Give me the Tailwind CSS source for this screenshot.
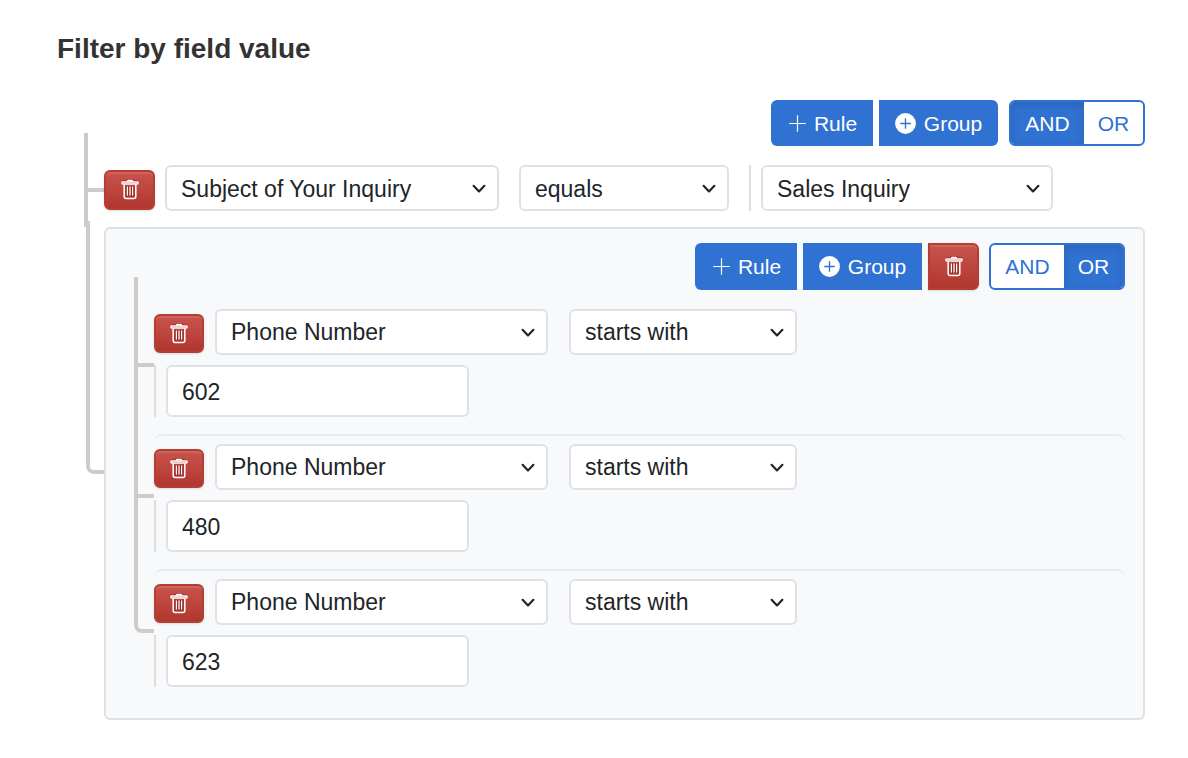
<!DOCTYPE html>
<html lang="en">
<head>
    <meta charset="UTF-8">
    <meta name="viewport" content="width=device-width, initial-scale=1.0">
    <title>Filter by field value</title>
    <script src="https://cdn.jsdelivr.net/npm/@tailwindcss/browser@4"></script>
</head>
<body class="bg-white font-['Liberation_Sans',Arial,sans-serif] text-[23px] text-[#212529]">
    <!-- Icons shared by the rows below -->
    <svg class="hidden" aria-hidden="true">
        <symbol id="icon-trash" viewBox="0 0 18 22">
            <g fill="none" stroke="#962a25" stroke-width="1.4">
                <path d="M5.5 .9h7M1 2.2h16"/>
                <path d="M5.2 6.4v11.2M7.6 7v10.4M10.4 7v10.4M12.8 6.4v11.2"/>
            </g>
            <g fill="none" stroke="currentColor" stroke-linejoin="round">
                <rect x=".9" y="3" width="16.2" height="2" rx=".8" stroke-width="1.3"/>
                <path d="M6.2 2.6l.7-1h4.2l.7 1" stroke-width="1.6"/>
                <path d="M3.2 5.4v12c0 1.3.8 2 2 2h7.6c1.2 0 2-.7 2-2v-12" stroke-width="1.5"/>
                <path d="M6.4 7.4v9.2M9 7.4v9.2M11.6 7.4v9.2" stroke-width="1.2"/>
            </g>
        </symbol>
        <symbol id="icon-plus" viewBox="0 0 16 16">
            <path d="M8 .2v15.6M.2 8h15.6" fill="none" stroke="currentColor" stroke-width="1.1"/>
        </symbol>
        <symbol id="icon-plus-circle" viewBox="0 0 22 22">
            <circle cx="11" cy="11" r="10.9" fill="currentColor"/>
            <path d="M11 5.5v11M5.5 11h11" fill="none" stroke="#3072d2" stroke-width="1.4"/>
        </symbol>
        <symbol id="icon-chevron" viewBox="0 0 14 10">
            <path d="M1.6 1.8L7 7.4l5.4-5.6" fill="none" stroke="currentColor" stroke-width="2.2" stroke-linecap="round" stroke-linejoin="round"/>
        </symbol>
    </svg>

    <main class="pt-[33px] pr-[43px] pb-9 pl-[57px]">
        <h1 class="text-[28px] leading-8 font-bold text-[#333]">Filter by field value</h1>

        <div class="mt-[35px] pl-[47px]">
            <div class="flex justify-end text-[21px]">
                <button type="button" class="flex h-[46px] w-[102px] items-center justify-center gap-2 rounded-l-md bg-[#3072d2] pt-px pl-0.5 text-white">
                    <svg class="size-[17px]"><use href="#icon-plus"/></svg>Rule
                </button>
                <button type="button" class="ml-1.5 flex h-[46px] w-[119px] items-center justify-center gap-2 rounded-r-md bg-[#3072d2] pt-px text-white">
                    <svg class="size-[21px]"><use href="#icon-plus-circle"/></svg>Group
                </button>
                <div class="ml-[11px] flex h-[46px] overflow-hidden rounded-md border-2 border-[#3072d2] bg-white text-[#3072d2]">
                    <label class="flex w-[73px] items-center justify-center pt-px has-checked:bg-[#3072d2] has-checked:text-white has-checked:inset-shadow-[0_3px_8px_#00000020]">
                        <input type="radio" name="root_cond" value="AND" class="sr-only" checked>AND
                    </label>
                    <label class="flex w-[59px] items-center justify-center pt-px has-checked:bg-[#3072d2] has-checked:text-white has-checked:inset-shadow-[0_3px_8px_#00000020]">
                        <input type="radio" name="root_cond" value="OR" class="sr-only">OR
                    </label>
                </div>
            </div>

            <ul>
                <li class="relative mt-[19px] flex items-center before:absolute before:-top-8 before:bottom-[19px] before:-left-5 before:w-5 before:border-b-4 before:border-l-4 before:border-[#ccc] after:absolute after:top-[27px] after:-bottom-4 after:-left-5 after:border-l-4 after:border-[#ccc]">
                    <button type="button" aria-label="Delete rule" class="relative z-10 mt-1 flex h-10 w-[51px] items-center justify-center rounded-md border-2 border-[#b33f33] bg-linear-to-b from-[#c9544d] to-[#b0362e] text-white shadow-sm inset-shadow-[0_2px_0_#ffffff18]">
                        <svg class="h-[22px] w-[18px]"><use href="#icon-trash"/></svg>
                    </button>
                    <div class="relative ml-2.5 w-[334px]">
                        <select aria-label="Field" class="h-[46px] w-full appearance-none rounded-md border-2 border-[#dee2e6] bg-white px-3.5 pt-0.5">
                            <option>Subject of Your Inquiry</option>
                        </select>
                        <svg class="pointer-events-none absolute top-[19px] right-[13px] h-2.5 w-3.5"><use href="#icon-chevron"/></svg>
                    </div>
                    <div class="relative ml-5 w-[210px]">
                        <select aria-label="Operator" class="h-[46px] w-full appearance-none rounded-md border-2 border-[#dee2e6] bg-white px-3.5 pt-0.5">
                            <option>equals</option>
                        </select>
                        <svg class="pointer-events-none absolute top-[19px] right-[13px] h-2.5 w-3.5"><use href="#icon-chevron"/></svg>
                    </div>
                    <div class="ml-5 border-l-2 border-[#ddd] pl-2.5">
                        <div class="relative w-[292px]">
                            <select aria-label="Value" class="h-[46px] w-full appearance-none rounded-md border-2 border-[#dee2e6] bg-white px-3.5 pt-0.5">
                                <option>Sales Inquiry</option>
                            </select>
                            <svg class="pointer-events-none absolute top-[19px] right-[13px] h-2.5 w-3.5"><use href="#icon-chevron"/></svg>
                        </div>
                    </div>
                </li>

                <!-- Nested group -->
                <li class="relative mt-4 rounded-md border-2 border-[#dee2e6] bg-[#f7f9fb] pt-3.5 pr-[18px] pb-3.5 pl-12 before:absolute before:-top-2 before:bottom-1/2 before:-left-5 before:w-[18px] before:rounded-bl-lg before:border-b-4 before:border-l-4 before:border-[#ccc]">
                    <div class="flex justify-end text-[21px]">
                        <button type="button" class="flex h-[47px] w-[102px] items-center justify-center gap-2 rounded-l-md bg-[#3072d2] pl-0.5 text-white">
                            <svg class="size-[17px]"><use href="#icon-plus"/></svg>Rule
                        </button>
                        <button type="button" class="ml-1.5 flex h-[47px] w-[119px] items-center justify-center gap-2 bg-[#3072d2] text-white">
                            <svg class="size-[21px]"><use href="#icon-plus-circle"/></svg>Group
                        </button>
                        <button type="button" aria-label="Delete group" class="ml-1.5 flex h-[47px] w-[51px] items-center justify-center rounded-r-md border-2 border-[#b33f33] bg-linear-to-b from-[#c9544d] to-[#b0362e] text-white shadow-sm inset-shadow-[0_2px_0_#ffffff18]">
                            <svg class="h-[22px] w-[18px]"><use href="#icon-trash"/></svg>
                        </button>
                        <div class="ml-2.5 flex h-[47px] overflow-hidden rounded-md border-2 border-[#3072d2] bg-white text-[#3072d2]">
                            <label class="flex w-[73px] items-center justify-center has-checked:bg-[#3072d2] has-checked:text-white has-checked:inset-shadow-[0_3px_8px_#00000020]">
                                <input type="radio" name="group_cond" value="AND" class="sr-only">AND
                            </label>
                            <label class="flex w-[59px] items-center justify-center has-checked:bg-[#3072d2] has-checked:text-white has-checked:inset-shadow-[0_3px_8px_#00000020]">
                                <input type="radio" name="group_cond" value="OR" class="sr-only" checked>OR
                            </label>
                        </div>
                    </div>

                    <ul class="mt-[9px]">
                        <li class="relative pt-2.5 pb-[17px] before:absolute before:-top-[22px] before:-left-5 before:h-[90px] before:w-5 before:border-b-4 before:border-l-4 before:border-[#ccc]">
                            <div class="flex items-center">
                                <button type="button" aria-label="Delete rule" class="mt-[3px] flex h-[39px] w-[50px] items-center justify-center rounded-md border-2 border-[#b33f33] bg-linear-to-b from-[#c9544d] to-[#b0362e] text-white shadow-sm inset-shadow-[0_2px_0_#ffffff18]">
                                    <svg class="h-[22px] w-[18px]"><use href="#icon-trash"/></svg>
                                </button>
                                <div class="relative ml-[11px] w-[333px]">
                                    <select aria-label="Field" class="h-[46px] w-full appearance-none rounded-md border-2 border-[#dee2e6] bg-white px-3.5">
                                        <option>Phone Number</option>
                                    </select>
                                    <svg class="pointer-events-none absolute top-[19px] right-[13px] h-2.5 w-3.5"><use href="#icon-chevron"/></svg>
                                </div>
                                <div class="relative ml-[21px] w-[228px]">
                                    <select aria-label="Operator" class="h-[46px] w-full appearance-none rounded-md border-2 border-[#dee2e6] bg-white px-3.5">
                                        <option>starts with</option>
                                    </select>
                                    <svg class="pointer-events-none absolute top-[19px] right-[13px] h-2.5 w-3.5"><use href="#icon-chevron"/></svg>
                                </div>
                            </div>
                            <div class="mt-2.5 flex border-l-2 border-[#ddd] pl-2.5">
                                <input type="text" aria-label="Value" value="602" class="h-[52px] w-[303px] rounded-md border-2 border-[#dee2e6] bg-white px-3.5 pt-0.5">
                            </div>
                        </li>
                        <li class="relative rounded-t-lg border-t-2 border-[#e9ebee] pt-2 pb-[17px] before:absolute before:-top-[73px] before:-left-5 before:h-[135px] before:w-5 before:border-b-4 before:border-l-4 before:border-[#ccc]">
                            <div class="flex items-center">
                                <button type="button" aria-label="Delete rule" class="mt-[3px] flex h-[39px] w-[50px] items-center justify-center rounded-md border-2 border-[#b33f33] bg-linear-to-b from-[#c9544d] to-[#b0362e] text-white shadow-sm inset-shadow-[0_2px_0_#ffffff18]">
                                    <svg class="h-[22px] w-[18px]"><use href="#icon-trash"/></svg>
                                </button>
                                <div class="relative ml-[11px] w-[333px]">
                                    <select aria-label="Field" class="h-[46px] w-full appearance-none rounded-md border-2 border-[#dee2e6] bg-white px-3.5">
                                        <option>Phone Number</option>
                                    </select>
                                    <svg class="pointer-events-none absolute top-[19px] right-[13px] h-2.5 w-3.5"><use href="#icon-chevron"/></svg>
                                </div>
                                <div class="relative ml-[21px] w-[228px]">
                                    <select aria-label="Operator" class="h-[46px] w-full appearance-none rounded-md border-2 border-[#dee2e6] bg-white px-3.5">
                                        <option>starts with</option>
                                    </select>
                                    <svg class="pointer-events-none absolute top-[19px] right-[13px] h-2.5 w-3.5"><use href="#icon-chevron"/></svg>
                                </div>
                            </div>
                            <div class="mt-2.5 flex border-l-2 border-[#ddd] pl-2.5">
                                <input type="text" aria-label="Value" value="480" class="h-[52px] w-[303px] rounded-md border-2 border-[#dee2e6] bg-white px-3.5 pt-0.5">
                            </div>
                        </li>
                        <li class="relative rounded-t-lg border-t-2 border-[#e9ebee] pt-2 pb-[17px] before:absolute before:-top-[73px] before:-left-5 before:h-[135px] before:w-5 before:rounded-bl-lg before:border-b-4 before:border-l-4 before:border-[#ccc]">
                            <div class="flex items-center">
                                <button type="button" aria-label="Delete rule" class="mt-[3px] flex h-[39px] w-[50px] items-center justify-center rounded-md border-2 border-[#b33f33] bg-linear-to-b from-[#c9544d] to-[#b0362e] text-white shadow-sm inset-shadow-[0_2px_0_#ffffff18]">
                                    <svg class="h-[22px] w-[18px]"><use href="#icon-trash"/></svg>
                                </button>
                                <div class="relative ml-[11px] w-[333px]">
                                    <select aria-label="Field" class="h-[46px] w-full appearance-none rounded-md border-2 border-[#dee2e6] bg-white px-3.5">
                                        <option>Phone Number</option>
                                    </select>
                                    <svg class="pointer-events-none absolute top-[19px] right-[13px] h-2.5 w-3.5"><use href="#icon-chevron"/></svg>
                                </div>
                                <div class="relative ml-[21px] w-[228px]">
                                    <select aria-label="Operator" class="h-[46px] w-full appearance-none rounded-md border-2 border-[#dee2e6] bg-white px-3.5">
                                        <option>starts with</option>
                                    </select>
                                    <svg class="pointer-events-none absolute top-[19px] right-[13px] h-2.5 w-3.5"><use href="#icon-chevron"/></svg>
                                </div>
                            </div>
                            <div class="mt-2.5 flex border-l-2 border-[#ddd] pl-2.5">
                                <input type="text" aria-label="Value" value="623" class="h-[52px] w-[303px] rounded-md border-2 border-[#dee2e6] bg-white px-3.5 pt-0.5">
                            </div>
                        </li>
                    </ul>
                </li>
            </ul>
        </div>
    </main>
</body>
</html>
